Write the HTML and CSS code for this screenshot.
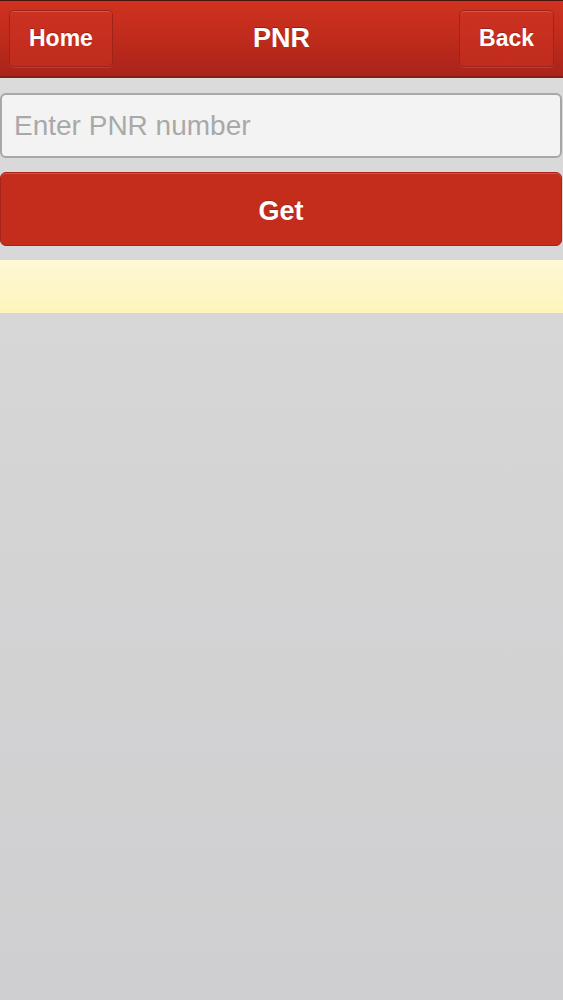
FILE: index.html
```html
<!DOCTYPE html>
<html>
<head>
<meta charset="utf-8">
<link rel="stylesheet" href="styles.css">
</head>
<body>
<div class="page">
  <header class="bar">
    <button class="navbtn left">Home</button>
    <h1 class="title">PNR</h1>
    <button class="navbtn right">Back</button>
  </header>
  <main class="content">
    <input class="field" type="text" placeholder="Enter PNR number">
    <button class="get">Get</button>
  </main>
  <div class="notice"></div>
</div>
</body>
</html>
```
FILE: styles.css
```css
html, body {
  margin: 0;
  padding: 0;
}
body {
  font-family: "Liberation Sans", Arial, sans-serif;
  background: linear-gradient(180deg, #dcdcdc 0%, #d4d4d5 50%, #cfcfd1 100%);
  min-height: 1000px;
}
.page {
  min-height: 1000px;
}
.bar {
  height: 75px;
  border-top: 1px solid #4a120c;
  border-bottom: 2px solid #8a1d12;
  background: linear-gradient(180deg, #d0321f 0%, #bf2b1c 50%, #a9231a 100%);
  display: grid;
  grid-template-columns: 1fr auto 1fr;
  align-items: center;
  padding: 0 9px 0 9px;
}
.navbtn {
  height: 57px;
  padding: 0 19px;
  font-family: "Liberation Sans", Arial, sans-serif;
  font-weight: bold;
  font-size: 23px;
  color: #fff;
  background: linear-gradient(180deg, #cc3121 0%, #c02c1d 100%);
  border: 1px solid #9e2418;
  border-radius: 5px;
  box-shadow: inset 0 1px 0 rgba(255,255,255,0.18), 0 1px 0 rgba(255,255,255,0.12);
  text-shadow: 0 -1px 0 rgba(0,0,0,0.25);
}
.left {
  justify-self: start;
}
.right {
  justify-self: end;
}
.title {
  margin: 0;
  font-size: 27px;
  font-weight: bold;
  color: #fff;
  text-shadow: 0 -1px 0 rgba(0,0,0,0.3);
}
.content {
  display: flex;
  flex-direction: column;
  padding: 15px 1px 14px 0;
  gap: 14px;
}
.field {
  height: 65px;
  box-sizing: border-box;
  border: 2px solid #a7a7a7;
  border-radius: 6px;
  background: #f3f3f3;
  padding: 0 12px;
  font-family: "Liberation Sans", Arial, sans-serif;
  font-size: 28px;
  color: #333;
  outline: none;
}
.field::placeholder {
  color: #a9a9a9;
}
.get {
  height: 74px;
  padding-top: 6px;
  border: 1px solid #a8241a;
  border-radius: 6px;
  background: #c42c1c;
  color: #fff;
  font-family: "Liberation Sans", Arial, sans-serif;
  font-weight: bold;
  font-size: 27px;
  box-shadow: inset 0 1px 0 rgba(255,255,255,0.2);
  text-shadow: 0 -1px 0 rgba(0,0,0,0.2);
}
.notice {
  height: 53px;
  background: linear-gradient(180deg, #fdf8d6 0%, #fdf4bb 100%);
}
```
